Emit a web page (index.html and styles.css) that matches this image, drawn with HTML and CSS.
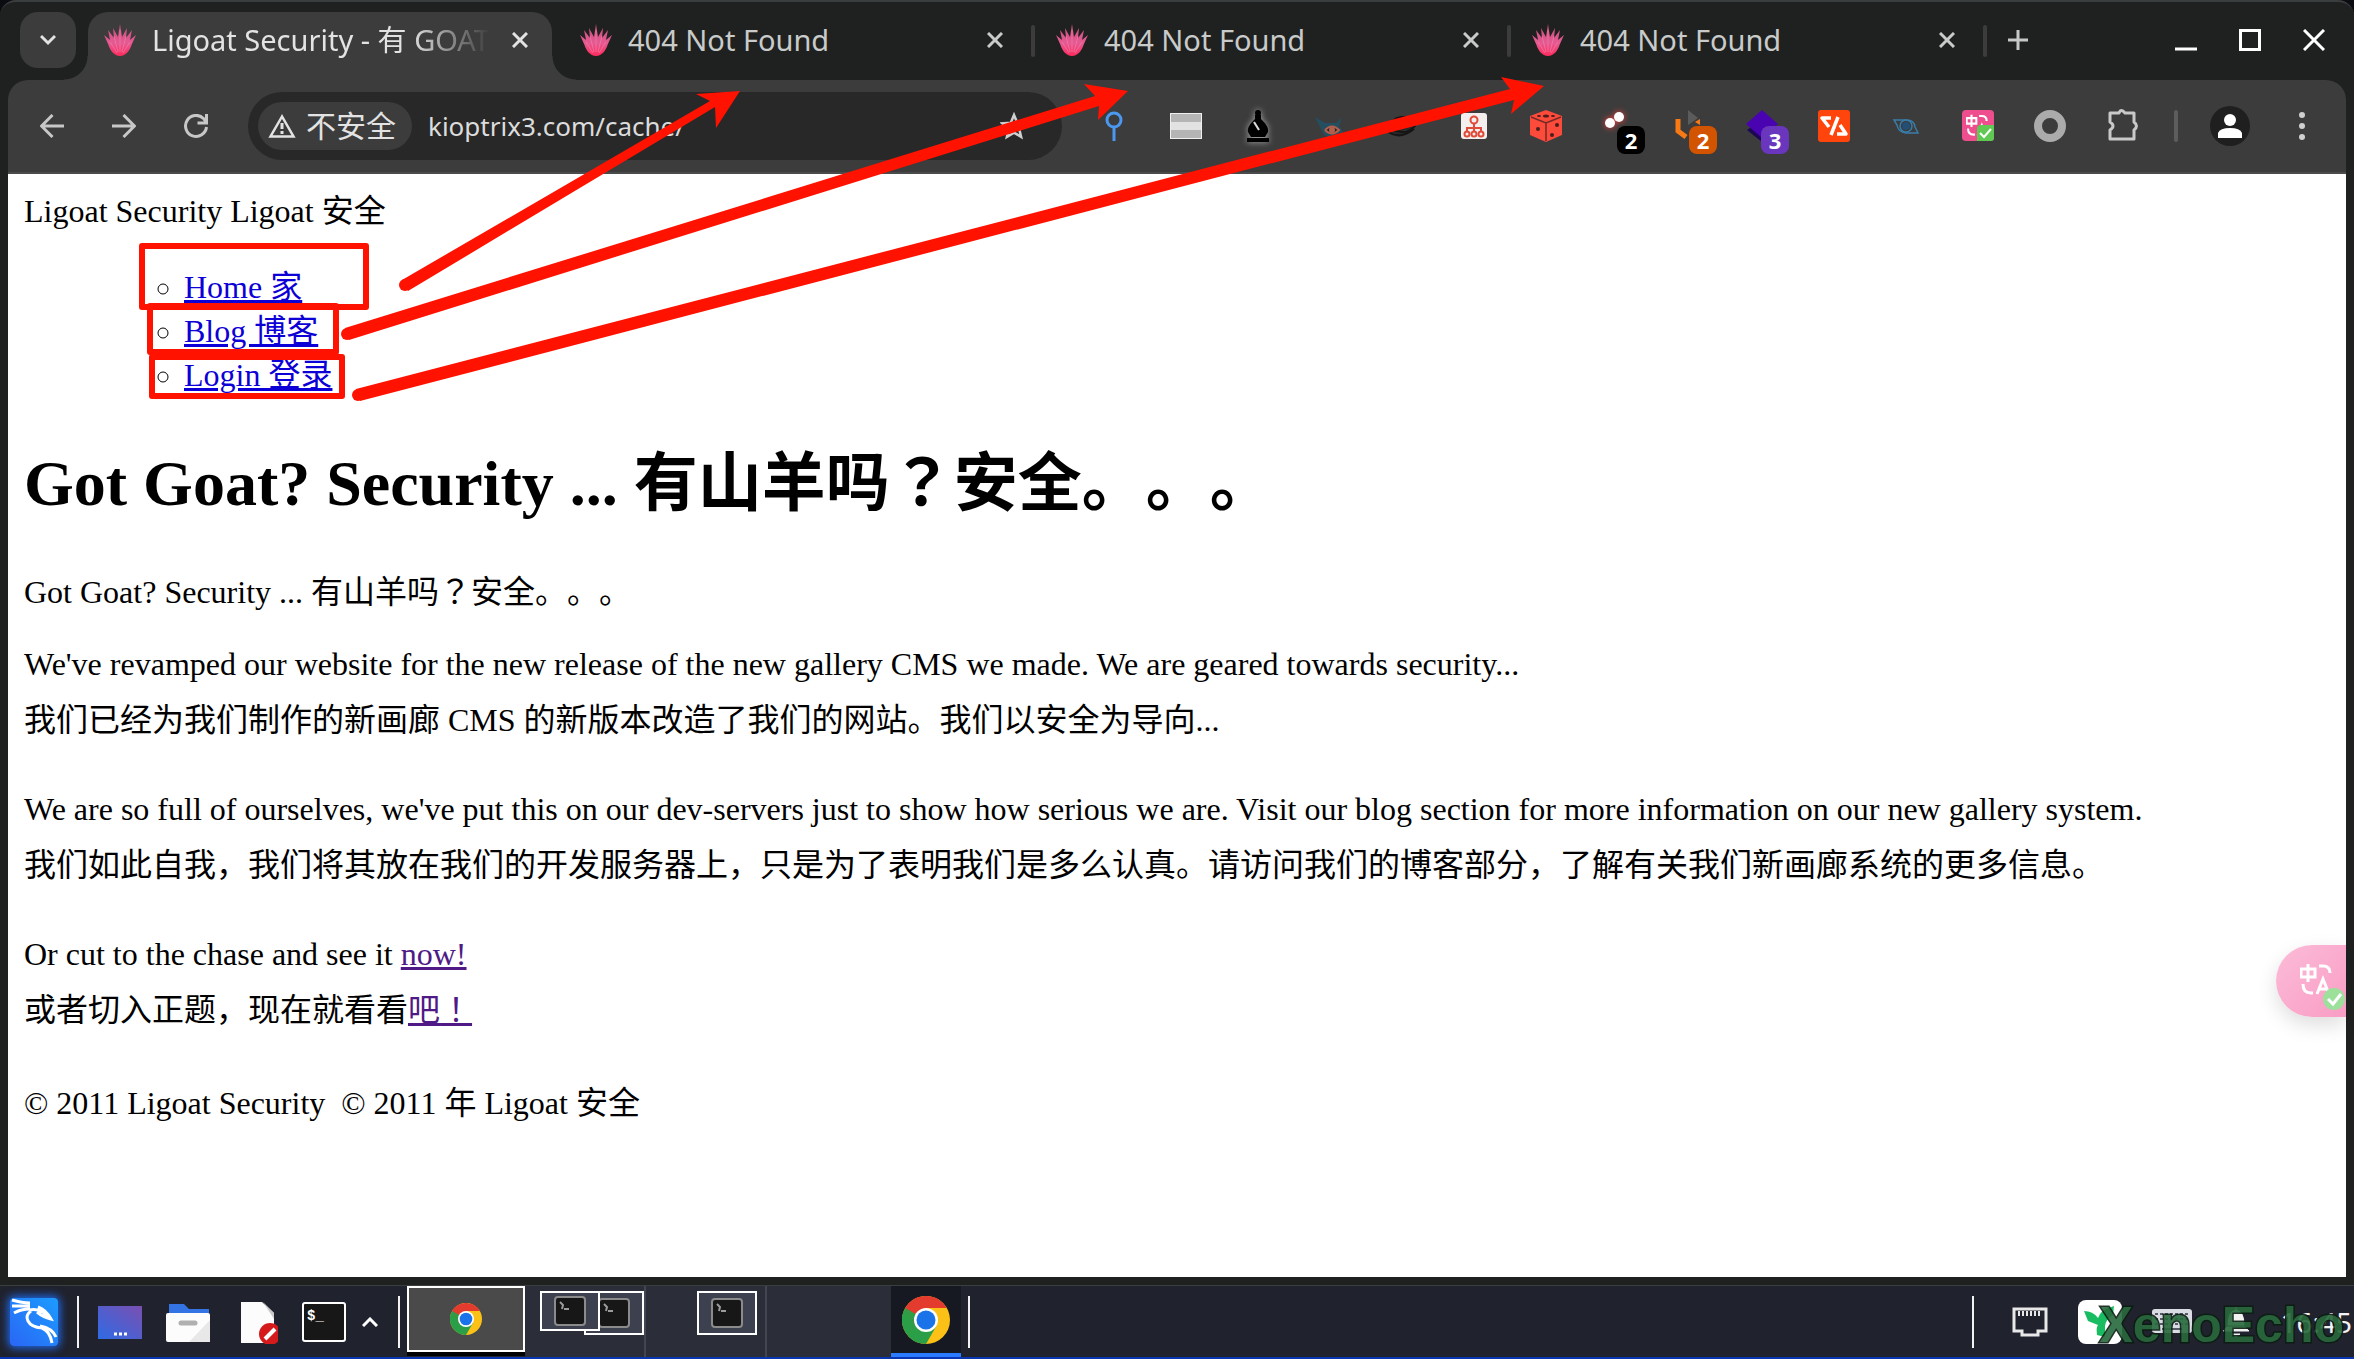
FILE: index.html
```html
<!DOCTYPE html>
<html lang="zh-CN">
<head>
<meta charset="utf-8">
<title>Ligoat Security - 有 GOAT</title>
<link rel="stylesheet" href="styles.css">
</head>
<body>
<svg class="defs" aria-hidden="true">
  <defs>
    <linearGradient id="lotus" x1="0" y1="0" x2="0" y2="1"><stop offset="0" stop-color="#c94f7c"/><stop offset=".6" stop-color="#e65a92"/><stop offset="1" stop-color="#ff2a5c"/></linearGradient>
    <linearGradient id="kali" x1="1" y1="0" x2="0" y2="1"><stop offset="0" stop-color="#1c9cff"/><stop offset="1" stop-color="#2a66f5"/></linearGradient>
    <linearGradient id="desk" x1="0" y1="1" x2="1" y2="0"><stop offset="0" stop-color="#2e6be6"/><stop offset="1" stop-color="#7a4fb0"/></linearGradient>
    <symbol id="fav" viewBox="0 0 32 32"><path fill="url(#lotus)" d="M16 32C10 32 6 26 4.500 21L0 11l6 5L4 6l6 8-1-10 5 9 2-13 2 13 5-9-1 10 6-8-2 10 6-5-4.500 10C26 26 22 32 16 32z"/><path d="M16 6v22M10 12l4 16M22 12l-4 16M6 18l7 11M26 18l-7 11" stroke="#f08ab4" stroke-width="1" fill="none" opacity=".55"/></symbol>
    <symbol id="x" viewBox="0 0 16 16"><path d="M1 1l14 14M15 1L1 15" stroke="currentColor" stroke-width="3" fill="none"/></symbol>
    <symbol id="chrome" viewBox="0 0 48 48"><circle cx="24" cy="24" r="24" fill="#fbc116"/><path d="M24 24L3.200 12A24 24 0 0 0 24 48l10.400-18z" fill="#2a9f48"/><path d="M3.200 12A24 24 0 0 1 44.800 12H24L13.600 30z" fill="#e33b2e"/><path d="M3.200 12l10.400 18L24 24z" fill="#2a9f48"/><circle cx="24" cy="24" r="12" fill="#fff"/><circle cx="24" cy="24" r="9.500" fill="#1a73e8"/></symbol>
    <symbol id="mini" viewBox="0 0 32 30"><rect x="1" y="1" width="30" height="28" rx="3" fill="#171717" stroke="#8b8b8b" stroke-width="2"/><path d="M6 6l3 3-1 4M10 13h5" stroke="#9c9c9c" stroke-width="2" fill="none"/></symbol>
    <symbol id="trans" viewBox="0 0 32 32"><path d="M1 6h14v8H1zM8 1v18M19 3h4q7 0 7 7M3 21q0 9 8 9h2M17 31l6-15 6 15M19 26h8" stroke="#fff" stroke-width="3" fill="none"/></symbol>
  </defs>
</svg>

<div class="window">
  <header class="tabstrip">
    <button class="tabsearch" aria-label="Search tabs"><svg width="16" height="12" viewBox="0 0 16 12"><path d="M1 2l7 7 7-7" stroke="#e3e3e3" stroke-width="3" fill="none"/></svg></button>
    <div class="tab active"><svg class="fav"><use href="#fav"/></svg><span class="title faded">Ligoat Security - 有 GOAT</span><button class="close" aria-label="Close tab"><svg><use href="#x"/></svg></button></div>
    <div class="tab"><svg class="fav"><use href="#fav"/></svg><span class="title">404 Not Found</span><button class="close" aria-label="Close tab"><svg><use href="#x"/></svg></button></div>
    <div class="tab"><svg class="fav"><use href="#fav"/></svg><span class="title">404 Not Found</span><button class="close" aria-label="Close tab"><svg><use href="#x"/></svg></button></div>
    <div class="tab"><svg class="fav"><use href="#fav"/></svg><span class="title">404 Not Found</span><button class="close" aria-label="Close tab"><svg><use href="#x"/></svg></button></div>
    <button class="newtab" aria-label="New tab"><svg width="20" height="20" viewBox="0 0 20 20"><path d="M10 0v20M0 10h20" stroke="#c7c7c7" stroke-width="3"/></svg></button>
    <div class="wincontrols">
      <button aria-label="Minimize"><svg width="22" height="22" viewBox="0 0 22 22"><path d="M0 20h22" stroke="#fff" stroke-width="3"/></svg></button>
      <button aria-label="Maximize"><svg width="22" height="22" viewBox="0 0 22 22"><rect x="1.500" y="1.500" width="19" height="19" fill="none" stroke="#fff" stroke-width="3"/></svg></button>
      <button aria-label="Close"><svg width="22" height="22" viewBox="0 0 22 22"><path d="M1 1l20 20M21 1L1 21" stroke="#fff" stroke-width="3"/></svg></button>
    </div>
  </header>

  <nav class="toolbar">
    <button class="nav" aria-label="Back"><svg width="24" height="24" viewBox="0 0 24 24"><path d="M24 12H2M12.500 1L1.500 12l11 11"/></svg></button>
    <button class="nav" aria-label="Forward"><svg width="24" height="24" viewBox="0 0 24 24"><path d="M0 12h22M11.500 1l11 11-11 11"/></svg></button>
    <button class="nav" aria-label="Reload"><svg width="24" height="24" viewBox="0 0 24 24"><path d="M22.500 13A10.500 10.500 0 1 1 19.500 4.500L22 8M22.500 0v9h-9"/></svg></button>
    <div class="omnibox">
      <button class="chip"><svg width="28" height="24" viewBox="0 0 28 24"><path d="M14 2.500L2.500 22.500h23z" fill="none" stroke="#e3e3e3" stroke-width="2.500"/><path d="M14 9v6M14 17v3" stroke="#e3e3e3" stroke-width="3"/></svg>不安全</button>
      <input class="url" type="text" aria-label="Address" value="kioptrix3.com/cache/">
      <button class="star" aria-label="Bookmark"><svg width="28" height="28" viewBox="0 0 28 28"><path d="M14 3l3.200 7.700 8.300.7-6.300 5.400 1.900 8.100L14 20.600l-7.100 4.300 1.900-8.100-6.300-5.400 8.300-.7z" fill="none" stroke="#d0d0d0" stroke-width="2.500"/></svg></button>
    </div>
    <div class="extensions">
      <button aria-label="Pin"><svg viewBox="0 0 32 32"><circle cx="16" cy="10" r="7" fill="none" stroke="#4a98f0" stroke-width="3"/><path d="M16 17v14" stroke="#4a98f0" stroke-width="3"/></svg></button>
      <button aria-label="Bands"><svg viewBox="0 0 32 32"><path fill="#efefef" d="M0 3h32v26H0z"/><path fill="#b5b5b5" d="M1 4h30v8H1zM1 20h30v8H1z"/><path fill="#e2e2e2" d="M1 12h30v8H1z"/></svg></button>
      <button aria-label="Bishop"><svg class="halo" viewBox="0 0 32 32"><circle cx="16" cy="3" r="3"/><path d="M13 5h6v4c4 4 8 8 7 13l-3 5H9l-3-5c-1-5 3-9 7-13zM5 28h22v4H5z"/><path d="M12 12l5 8" stroke="#ddd" stroke-width="2"/></svg></button>
      <button aria-label="Watcher"><svg viewBox="0 0 32 32"><path d="M1 7l10 6 11 0 6-5-3 8 4 6q-8 10-19 3z" fill="#244f61"/><path d="M11 20q7-7 14 0-7 7-14 0" fill="#222" stroke="#b4604d" stroke-width="2"/><circle cx="18" cy="20" r="3" fill="#b4604d"/></svg></button>
      <button aria-label="Planet"><svg viewBox="0 0 32 32"><path d="M4 19q1-11 11-12t14 9q-8 10-25 3zM2 22q12 8 26-3" stroke="#151515" stroke-width="2" fill="#282828"/></svg></button>
      <button aria-label="Site map"><svg viewBox="0 0 32 32"><rect x="3" y="3" width="26" height="26" rx="3" fill="#f4efee"/><g fill="none" stroke="#e04a38" stroke-width="2"><circle cx="16" cy="10" r="3.500"/><circle cx="9" cy="24" r="2.500"/><circle cx="16" cy="24" r="2.500"/><circle cx="23" cy="24" r="2.500"/><path d="M16 14v7M9 21v-3h14v3"/></g></svg></button>
      <button aria-label="Dice"><svg viewBox="0 0 32 32"><path d="M16 0l16 6v19l-16 7-16-7V6z" fill="#fc4a3b"/><path d="M1 7l15 6 15-6M16 13v18" stroke="#742a25" stroke-width="1.500" fill="none"/><g fill="#4c1d1b"><ellipse cx="16" cy="6" rx="3" ry="1.500"/><ellipse cx="9" cy="6" rx="2" ry="1"/><ellipse cx="23" cy="6" rx="2" ry="1"/><circle cx="8" cy="19" r="2"/><circle cx="22" cy="25" r="2"/><circle cx="27" cy="15" r="2"/></g></svg></button>
      <button aria-label="Lights"><svg class="glow" viewBox="0 0 32 32"><circle cx="8" cy="13" r="5" fill="#fff"/><circle cx="17" cy="7" r="5" fill="#fff"/></svg><span class="badge black">2</span></button>
      <button aria-label="Hooks"><svg viewBox="0 0 32 32"><path d="M4 9v12l8 6" stroke="#f97a15" stroke-width="5" fill="none"/><path d="M14 0l10 8-10 7z" fill="#5b5b5b"/><path d="M21 12l5-3v6z" fill="#f97a15"/></svg><span class="badge orange">2</span></button>
      <button aria-label="Layers"><svg viewBox="0 0 32 32"><path d="M1 20l15-10 15 10-15 12z" fill="#1d0653"/><path d="M0 14L16 0l16 14-16 14z" fill="#4903b0"/></svg><span class="badge purple">3</span></button>
      <button aria-label="Code"><svg viewBox="0 0 32 32"><rect width="32" height="32" rx="3" fill="#ff450b"/><path d="M13 8H4l7 9M20 7l-7 18M22 15l6 9h-9" stroke="#fff" stroke-width="3.500" fill="none" stroke-linejoin="round"/></svg></button>
      <button aria-label="Orbit"><svg viewBox="0 0 32 32"><g fill="none" stroke="#397ca9" stroke-width="1.500"><path d="M4 10h13q7 0 8 7l3 6H16q-8-1-9-8z"/><circle cx="16" cy="16" r="6"/></g><circle cx="16" cy="16" r="4" fill="#244e72"/></svg></button>
      <button aria-label="Translate"><svg viewBox="0 0 32 32"><rect width="32" height="31" rx="4" fill="#ee4e8e"/><use href="#trans" x="4" y="4" width="22" height="22"/><path d="M19 15h13v13q0 3-3 3H15V19q0-4 4-4z" fill="#60c953"/><path d="M18 23l4 4 7-8" stroke="#fff" stroke-width="2" fill="none"/></svg></button>
      <button aria-label="Ring"><svg viewBox="0 0 32 32"><circle cx="16" cy="16" r="12" fill="none" stroke="#ababab" stroke-width="8"/></svg></button>
      <button aria-label="Extensions"><svg viewBox="0 0 32 32"><path d="M4 3h9q2-5 6 0h9v9q5 4 0 8v9H4v-9q6-4 0-8z" fill="none" stroke="#c9c9c9" stroke-width="3" stroke-linejoin="round"/></svg></button>
    </div>
    <span class="divider"></span>
    <button class="avatar" aria-label="Profile"><svg width="24" height="24" viewBox="0 0 24 24"><circle cx="12" cy="6" r="6" fill="#fff"/><path d="M0 24v-5q2-5 12-5t12 5v5z" fill="#fff"/></svg></button>
    <button class="menu" aria-label="Menu"><svg width="6" height="28" viewBox="0 0 6 28"><g fill="#d0d0d0"><circle cx="3" cy="3" r="3"/><circle cx="3" cy="14" r="3"/><circle cx="3" cy="25" r="3"/></g></svg></button>
  </nav>

  <main class="page">
    <div>Ligoat Security Ligoat 安全</div>
    <ul class="links">
      <li><a href="#home">Home 家</a></li>
      <li><a href="#blog">Blog 博客</a></li>
      <li><a href="#login">Login 登录</a></li>
    </ul>
    <h1>Got Goat? Security ... 有山羊吗<span class="mark" lang="ja">？</span>安全。。。</h1>
    <p class="lead">Got Goat? Security ... 有山羊吗<span class="mark" lang="ja">？</span>安全。。。</p>
    <section class="news">
      <div class="para"><p class="en">We've revamped our website for the new release of the new gallery CMS we made. We are geared towards security...</p><p>我们已经为我们制作的新画廊 CMS 的新版本改造了我们的网站。我们以安全为导向...</p></div>
      <div class="para"><p class="en">We are so full of ourselves, we've put this on our dev-servers just to show how serious we are. Visit our blog section for more information on our new gallery system.</p><p>我们如此自我，我们将其放在我们的开发服务器上，只是为了表明我们是多么认真。请访问我们的博客部分，了解有关我们新画廊系统的更多信息。</p></div>
      <div class="para"><p class="en">Or cut to the chase and see it <a class="visited" href="#now">now!</a></p><p>或者切入正题，现在就看看<a class="visited" href="#now">吧<span class="mark" lang="ja">！</span></a></p></div>
      <div>© 2011 Ligoat Security &nbsp;© 2011 年 Ligoat 安全</div>
    </section>
    <button class="translate" aria-label="Translate page"><svg width="32" height="32"><use href="#trans"/></svg><svg class="tick" width="22" height="22" viewBox="0 0 22 22"><circle cx="11" cy="11" r="11" fill="#9de09b"/><path d="M5 11l5 5 8-10" stroke="#fff" stroke-width="3" fill="none"/></svg></button>
  </main>
</div>

<footer class="taskbar">
  <button class="kali" aria-label="Applications"><svg width="48" height="48" viewBox="0 0 48 48"><rect width="48" height="48" rx="2" fill="url(#kali)"/><g fill="none" stroke="#fff" stroke-width="3"><path d="M2 2q10 3 18 3M2 8q8 0 18 0M4 15q7-4 16-4"/><path d="M19 12q12-3 22 9M28 9q8 3 13 12-8-2-14-7M21 13q-6 4-3 10t14 7q8 3 10 15M30 28q12 2 16 11"/></g></svg></button>
  <span class="rule"></span>
  <div class="launchers">
    <button aria-label="Show desktop"><svg viewBox="0 0 44 44"><path d="M0 6h44v33H0z" fill="url(#desk)"/><path d="M16 34h3M21 34h3M26 34h3" stroke="#fff" stroke-width="3"/></svg></button>
    <button aria-label="Files"><svg viewBox="0 0 44 44"><path d="M3 14V4h15l5 5h20v8H3z" fill="#3473e3"/><rect y="13" width="44" height="29" rx="2" fill="#fcfcfc"/><path d="M44 20v22H23z" fill="#e8e8e8"/><path d="M15 23h14" stroke="#b0b0b0" stroke-width="5" stroke-linecap="round"/></svg></button>
    <button aria-label="Text editor"><svg viewBox="0 0 44 44"><path d="M7 2h21l12 11v30H7z" fill="#fcfcfc"/><path d="M29 2l11 17V13z" fill="#c9c9c9"/><circle cx="36" cy="34" r="11" fill="#d41a1a"/><path d="M31 39l10-10" stroke="#fff" stroke-width="4"/></svg></button>
    <button aria-label="Terminal"><svg viewBox="0 0 44 44"><rect x="1" y="3" width="42" height="38" rx="2" fill="#171717" stroke="#fff" stroke-width="2"/><text x="5" y="20" class="prompt">$_</text></svg></button>
  </div>
  <button class="more" aria-label="More launchers"><svg width="16" height="10" viewBox="0 0 16 10"><path d="M1 9l7-7 7 7" stroke="#fff" stroke-width="3" fill="none"/></svg></button>
  <span class="rule"></span>
  <div class="pager">
    <button class="cell current" aria-label="Workspace 1"><svg width="32" height="32"><use href="#chrome"/></svg></button>
    <button class="cell stacked" aria-label="Workspace 2"><span class="thumb front"><svg><use href="#mini"/></svg></span><span class="thumb back"><svg><use href="#mini"/></svg></span></button>
    <button class="cell single" aria-label="Workspace 3"><span class="thumb"><svg><use href="#mini"/></svg></span></button>
    <button class="cell" aria-label="Workspace 4"></button>
  </div>
  <button class="task" aria-label="Chrome"><svg width="48" height="48"><use href="#chrome"/></svg></button>
  <span class="rule"></span>
  <div class="tray">
    <span class="rule"></span>
    <svg width="36" height="30" viewBox="0 0 36 30"><path d="M2 2h32v22h-8v4H10v-4H2z" fill="#20222d" stroke="#e8e8e8" stroke-width="3"/><path d="M7 4v5M11 4v5M15 4v5M19 4v5M23 4v5M27 4v5" stroke="#e8e8e8" stroke-width="2"/></svg>
    <svg width="44" height="44" viewBox="0 0 44 44"><rect width="44" height="44" rx="8" fill="#fff"/><path d="M6 11q9 0 14 7 3-9 16-12l-1 9q-7 4-8 11v11l-8-2q-1-8 1-10l-10-4z" fill="#18bd62"/></svg>
    <svg width="40" height="26" viewBox="0 0 40 26"><rect width="40" height="24" rx="3" fill="#d9dce3"/><path d="M3 5h34M3 10h34M3 15h34" stroke="#555b67" stroke-width="2" stroke-dasharray="3 2"/><path d="M10 20h20" stroke="#555b67" stroke-width="2"/></svg>
    <svg width="28" height="30" viewBox="0 0 28 30"><path d="M14 0v3M6 18q0-14 8-15 8 1 8 15zM5 20h18l4 4H1zM10 27h8l-4 3z" fill="#f2f2f2" stroke="#f2f2f2"/></svg>
    <time>16:45</time>
  </div>
</footer>
<span class="watermark">XenoEcho</span>

<svg class="marks" width="1560" height="410" viewBox="0 0 1560 410" aria-hidden="true">
  <g fill="none" stroke="#ff1200" stroke-width="6" stroke-linejoin="round">
    <rect x="142" y="246" width="224" height="61"/><rect x="150" y="306" width="186" height="46"/><rect x="152" y="357" width="190" height="39"/>
  </g>
  <g fill="#ff1200">
    <circle cx="405" cy="285" r="6"/><path d="M402 280L710 101l-14-7 44-3-24 37-1-21L408 291z"/>
    <circle cx="347" cy="334" r="6"/><path d="M345 328L1095 96l-11-12 44 7-30 29 1-14L349 340z"/>
    <circle cx="358" cy="395" r="6"/><path d="M356 389L1510 89l-9-12 43 9-33 28 3-14L360 401z"/>
  </g>
</svg>
</body>
</html>
```
FILE: styles.css
```css
* { box-sizing: border-box; }
body {
  margin: 0;
  min-height: 100vh;
  display: flex;
  flex-direction: column;
  position: relative;
  overflow: hidden;
  background: #0a0c12;
  font-family: "Noto Sans", "Noto Sans CJK SC", sans-serif;
}
button {
  border: 0;
  padding: 0;
  background: none;
  color: inherit;
  font: inherit;
  display: flex;
  align-items: center;
  justify-content: center;
  flex: none;
}
svg { display: block; flex: none; }
.defs { position: absolute; width: 0; height: 0; }

.window {
  flex: 1;
  display: flex;
  flex-direction: column;
  padding: 0 8px 8px;
  background: #1f2120;
  border-top: 2px solid #3b3e3e;
  border-bottom: 1px solid #3b3e3e;
  border-radius: 16px 16px 0 0;
}

.tabstrip {
  display: flex;
  height: 78px;
  padding: 10px 21px 0 12px;
  color: #c9cbca;
  font-size: 29px;
}
.tabsearch {
  width: 56px;
  height: 56px;
  margin-right: 12px;
  border-radius: 18px;
  background: #3c3c3c;
}
.tab {
  display: flex;
  align-items: center;
  width: 476px;
  height: 68px;
  padding: 0 35px 12px 16px;
  position: relative;
}
.tab:not(.active)::after {
  content: "";
  width: 4px;
  height: 32px;
  border-radius: 2px;
  background: #3c3c3c;
  position: absolute;
  right: 5px;
  top: 13px;
}
.tab.active {
  width: 464px;
  margin-right: 12px;
  padding-right: 22px;
  background: #3c3c3c;
  border-radius: 20px 20px 0 0;
  color: #e3e3e3;
}
.tab.active::before, .tab.active::after {
  content: "";
  position: absolute;
  bottom: 0;
  width: 24px;
  height: 24px;
}
.tab.active::before { right: 100%; background: radial-gradient(circle at 0 0, transparent 23px, #3c3c3c 24px); }
.tab.active::after { left: 100%; background: radial-gradient(circle at 100% 0, transparent 23px, #3c3c3c 24px); }
.fav { width: 32px; height: 32px; margin-right: 16px; }
.title { flex: 1; overflow: hidden; white-space: nowrap; line-height: 40px; }
.faded {
  margin-right: 20px;
  -webkit-mask-image: linear-gradient(to left, transparent, #000 80px);
  mask-image: linear-gradient(to left, transparent, #000 80px);
}
.close { width: 20px; height: 20px; }
.close svg { width: 16px; height: 16px; }
.newtab { width: 20px; height: 56px; margin-left: 16px; }
.wincontrols { display: flex; gap: 42px; height: 56px; margin-left: auto; }

.toolbar {
  display: flex;
  align-items: center;
  height: 94px;
  padding: 0 16px;
  background: #3c3c3c;
  border-bottom: 2px solid #4a4c4c;
  border-radius: 20px 20px 0 0;
}
.nav { width: 56px; height: 56px; margin-right: 16px; }
.nav svg { fill: none; stroke: #c7c7c7; stroke-width: 3; }
.omnibox {
  display: flex;
  align-items: center;
  flex: 1;
  height: 68px;
  margin-left: 8px;
  padding: 0 34px 0 10px;
  border-radius: 34px;
  background: #282828;
}
.chip {
  justify-content: flex-start;
  height: 48px;
  width: 154px;
  padding-left: 10px;
  gap: 10px;
  border-radius: 24px;
  background: #3c3c3c;
  color: #e3e3e3;
  font-size: 30px;
  line-height: 44px;
}
.url {
  flex: 1;
  min-width: 0;
  margin-left: 16px;
  padding: 0;
  border: 0;
  outline: 0;
  background: none;
  color: #dcdcdc;
  font: 26px/40px "Noto Sans", sans-serif;
}
.extensions { display: flex; gap: 40px; margin-left: 36px; }
.extensions button { width: 32px; height: 32px; position: relative; }
.extensions svg { width: 32px; height: 32px; overflow: visible; }
.halo { filter: drop-shadow(0 0 3px #aaa); }
.glow { filter: drop-shadow(0 0 3px #ff4040); }
.badge {
  position: absolute;
  left: 15px;
  top: 16px;
  width: 28px;
  height: 28px;
  border-radius: 8px;
  color: #fff;
  font: bold 22px/28px "Noto Sans", sans-serif;
  text-align: center;
}
.black { background: #000; }
.orange { background: #d35400; }
.purple { background: #6936bd; }
.divider { width: 4px; height: 32px; margin: 0 32px 0 36px; border-radius: 2px; background: #5d5d5d; }
.avatar { width: 40px; height: 40px; border-radius: 50%; background: #1f1f1f; }
.menu { width: 56px; height: 56px; margin-left: 24px; }

.page {
  flex: 1;
  position: relative;
  padding: 15px 16px 16px;
  background: #fff;
  color: #000;
  font: 32px/44px "Liberation Serif", "Noto Sans CJK SC", serif;
  text-spacing-trim: space-all;
}
.mark { font-family: "Noto Sans CJK JP", sans-serif; line-height: 1; }
.page p { margin: 0; }
.links { margin: 32px 0 43px; padding-left: 160px; list-style: circle; }
.page a { color: #0d00d6; text-decoration: underline; }
.page a.visited { color: #4f1a86; }
.page h1 { margin: 0 0 42px; font-size: 64px; line-height: 88px; }
.news { display: flex; flex-direction: column; gap: 49px; margin-top: 32px; }
.para { display: flex; flex-direction: column; gap: 16px; }
.page .en { line-height: 36px; }
.translate {
  position: absolute;
  right: 0;
  bottom: 260px;
  width: 70px;
  height: 72px;
  border-radius: 36px 0 0 36px;
  background: linear-gradient(135deg, #fcbcd8, #f99dc5);
  box-shadow: 0 8px 20px #0002;
}
.translate svg:first-child { margin-left: 10px; margin-bottom: 4px; }
.translate .tick { position: absolute; right: 1px; bottom: 7px; }

.taskbar {
  display: flex;
  align-items: center;
  height: 73px;
  padding: 0 2px 0 10px;
  background: #20222d;
  border-bottom: 2px solid #0a35b0;
  color: #f2f2f2;
}
.kali svg { border-radius: 4px; box-shadow: 0 0 8px 2px #1f6bf0; }
.rule { width: 2px; height: 52px; flex: none; background: #f2f2f2; }
.kali + .rule { margin: 0 19px 0 19px; }
.launchers { display: flex; gap: 24px; }
.launchers svg { width: 44px; height: 44px; }
.launchers button { width: 44px; }
.prompt { font: bold 14px "Liberation Mono", monospace; fill: #fff; }
.more { margin: 0 20px 0 16px; }
.pager { display: flex; align-self: stretch; margin-left: 7px; }
.cell {
  justify-content: flex-end;
  align-items: flex-start;
  width: 121px;
  padding-top: 5px;
  background: #2b2d38;
  border-right: 2px solid #434551;
}
.cell.current {
  justify-content: center;
  align-items: center;
  width: 118px;
  height: 66px;
  padding: 0;
  background: #4a4a4a;
  border: 2px solid #fff;
  box-shadow: 0 4px #000;
}
.cell:last-child { width: 124px; border: 0; }
.cell.single { padding-right: 8px; }
.thumb {
  width: 60px;
  height: 44px;
  display: flex;
  align-items: center;
  justify-content: center;
  background: #3d414f;
  border: 2px solid #fff;
}
.thumb svg { width: 32px; height: 30px; }
.front { height: 40px; z-index: 1; }
.back { margin-left: -16px; }
.task { width: 70px; align-self: stretch; margin-right: 7px; background: #171922; border-bottom: 4px solid #2a7bff; }
.tray { display: flex; align-items: center; gap: 30px; margin-left: auto; }
.tray .rule { margin-right: 8px; }
.tray time { font-size: 28px; line-height: 40px; }
.watermark {
  position: absolute;
  right: 10px;
  bottom: 6px;
  color: #286a3c;
  font: bold 50px/56px "Liberation Sans", sans-serif;
  -webkit-text-stroke: 3px #0c1c12;
  paint-order: stroke fill;
  opacity: .9;
}
.marks { position: absolute; left: 0; top: 0; pointer-events: none; }
```
